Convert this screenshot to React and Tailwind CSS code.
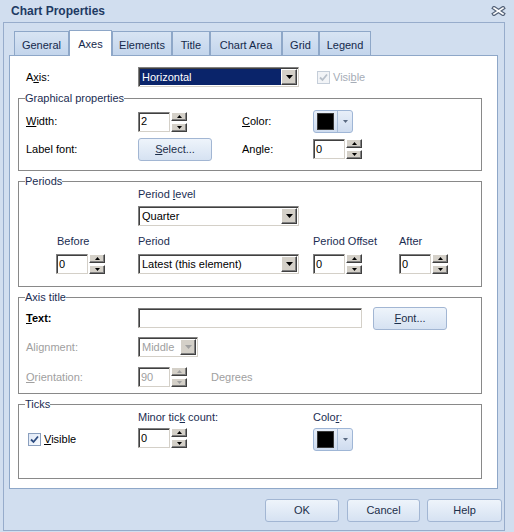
import React from "react";

const raised =
  "bg-[#d4d0c8] border border-t-white border-l-white border-r-[#404040] border-b-[#404040] shadow-[inset_-1px_-1px_0_#808080]";
const sunken =
  "border border-t-[#808080] border-l-[#808080] border-r-[#d4d0c8] border-b-[#d4d0c8] shadow-[inset_1px_1px_0_#404040]";
const navy = "text-[#1b2d52]";

function Tri({ up, w = 7, h = 4, color = "#000" }) {
  const d = up ? `M0 ${h}h${w}L${w / 2} 0z` : `M0 0h${w}L${w / 2} ${h}z`;
  return (
    <svg width={w} height={h} viewBox={`0 0 ${w} ${h}`}>
      <path d={d} fill={color} />
    </svg>
  );
}

function SpinBtn({ up, disabled }) {
  return (
    <div className={`w-[16px] h-[9px] flex items-center justify-center ${raised}`}>
      <Tri up={up} w={5} h={3} color={disabled ? "#a0a0a0" : "#000"} />
    </div>
  );
}

function Spin({ value, disabled }) {
  return (
    <div className="flex items-center">
      <div
        className={`w-[32px] h-[20px] bg-white pl-[2px] flex items-center ${sunken} ${
          disabled ? "text-[#a0a0a0]" : ""
        }`}
      >
        {value}
      </div>
      <div className="ml-[1px] flex flex-col gap-[2px]">
        <SpinBtn up disabled={disabled} />
        <SpinBtn disabled={disabled} />
      </div>
    </div>
  );
}

function Combo({ value, width, selected, disabled }) {
  return (
    <div className={`${width} h-[20px] bg-white flex items-center ${sunken}`}>
      <div
        className={`flex-1 self-stretch my-[1px] ml-[1px] flex items-center pl-[2px] ${
          selected ? "bg-[#0a246a] text-white" : ""
        } ${disabled ? "text-[#a0a0a0]" : ""}`}
      >
        {value}
      </div>
      <div className={`w-[16px] h-[16px] mr-[1px] flex items-center justify-center ${raised}`}>
        <Tri color={disabled ? "#a0a0a0" : "#000"} />
      </div>
    </div>
  );
}

function ColorPick() {
  return (
    <div className="w-[40px] h-[23px] rounded-[3px] border border-[#9fb6d6] bg-gradient-to-b from-[#e8eff9] to-[#cfdcef] flex items-center">
      <div className="ml-[3px] w-[17px] h-[17px] bg-black border border-[#3a3a3a]" />
      <div className="ml-[3px] w-px h-[21px] bg-[#a9bdd8]" />
      <div className="flex-1 flex justify-center">
        <Tri w={5} h={3} color="#5a6a82" />
      </div>
    </div>
  );
}

function Btn({ children, width, className = "" }) {
  return (
    <div
      className={`${width} shrink-0 h-[23px] rounded-[3px] border border-[#a2b6d3] bg-gradient-to-b from-[#eef4fb] to-[#d6e2f2] flex items-center justify-center text-[#1c2e4a] ${className}`}
    >
      {children}
    </div>
  );
}

function Check({ disabled }) {
  return (
    <div
      className={`w-[13px] h-[13px] border flex items-center justify-center ${
        disabled
          ? "border-[#c5ced9] bg-[#f2f4f7]"
          : "border-[#8a9fbe] bg-gradient-to-br from-[#dfe8f5] to-[#f8fbff]"
      }`}
    >
      <svg width="11" height="11" viewBox="0 0 11 11">
        <path
          d="M2 5.5l2.5 2.5L9 2.5"
          fill="none"
          stroke={disabled ? "#b8c0ca" : "#2d4c80"}
          strokeWidth="1.8"
        />
      </svg>
    </div>
  );
}

function Group({ title, className = "", children }) {
  return (
    <fieldset className={`w-[464px] border border-[#898989] ${className}`}>
      <legend className={`ml-[6px] leading-[13px] ${navy}`}>{title}</legend>
      {children}
    </fieldset>
  );
}

const tabs = [
  ["General", "w-[55px]"],
  ["Axes", "w-[43px]"],
  ["Elements", "w-[60px]"],
  ["Title", "w-[38px]"],
  ["Chart Area", "w-[72px]"],
  ["Grid", "w-[37px]"],
  ["Legend", "w-[52px]"],
];

export default function App() {
  return (
    <div className="w-[514px] h-[532px] bg-[#d1deef] font-['Liberation_Sans',Arial,sans-serif] text-[11px] leading-[13px] text-black select-none">
      {/* title bar */}
      <div className="h-[22px] flex items-center justify-between pl-[11px] pr-[8px]">
        <span className="font-bold text-[12px] text-[#1e3a63]">Chart Properties</span>
        <svg width="15" height="10" viewBox="0 0 15 10">
          <path d="M3 2l9 6M12 2l-9 6" stroke="#56647a" strokeWidth="4" strokeLinecap="square" />
          <path d="M3 2l9 6M12 2l-9 6" stroke="#fff" strokeWidth="1.6" strokeLinecap="square" />
        </svg>
      </div>

      <div className="ml-[3px] w-[502px] h-[509px] border border-[#97accb] px-[5px] pt-[7px]">
        {/* tab strip */}
        <div className="ml-[5px] h-[25px] flex items-end">
          {tabs.map(([name, w]) =>
            name === "Axes" ? (
              <div
                key={name}
                className={`${w} h-[26px] -mb-px relative z-10 bg-white border border-b-0 border-[#8ea7c8] flex items-center justify-center pt-[2px] text-[#15294b]`}
              >
                {name}
              </div>
            ) : (
              <div
                key={name}
                className={`${w} h-[24px] bg-gradient-to-b from-[#d8e4f3] to-[#c3d5ec] border border-b-0 border-[#8ea7c8] flex items-center justify-center pt-[4px] text-[#15294b]`}
              >
                {name}
              </div>
            )
          )}
        </div>

        {/* panel */}
        <div className="w-[489px] h-[434px] bg-white border border-[#8ea7c8] pt-[11px] pl-[8px]">
          <div className="h-[20px] flex items-center">
            <div className="w-[120px] pl-[8px]">
              A<span className="underline">x</span>is:
            </div>
            <Combo value="Horizontal" width="w-[161px]" selected />
            <div className="ml-[18px] flex items-center">
              <Check disabled />
              <span className="ml-[3px] text-[#a6adb7]">
                Visi<span className="underline">b</span>le
              </span>
            </div>
          </div>

          <Group title="Graphical properties" className="mt-[5px] pb-[10px]">
            <div className="mt-[5px] h-[23px] flex items-center pl-[7px]">
              <div className="w-[112px]">
                <span className="underline">W</span>idth:
              </div>
              <div className="w-[104px]">
                <Spin value="2" />
              </div>
              <div className="w-[71px]">
                <span className="underline">C</span>olor:
              </div>
              <ColorPick />
            </div>
            <div className="mt-[5px] h-[22px] flex items-center pl-[7px]">
              <div className="w-[112px]">Label font:</div>
              <div className="w-[104px]">
                <Btn width="w-[74px]">
                  <span>
                    <span className="underline">S</span>elect...
                  </span>
                </Btn>
              </div>
              <div className="w-[71px]">Angle:</div>
              <Spin value="0" />
            </div>
          </Group>

          <Group title="Periods" className="mt-[4px] pb-[12px]">
            <div className={`pl-[119px] ${navy}`}>
              Period <span className="underline">l</span>evel
            </div>
            <div className="mt-[5px] pl-[119px]">
              <Combo value="Quarter" width="w-[161px]" />
            </div>
            <div className={`mt-[9px] flex pl-[38px] ${navy}`}>
              <div className="w-[81px]">Before</div>
              <div className="w-[175px]">Period</div>
              <div className="w-[86px]">Period Offset</div>
              <div>After</div>
            </div>
            <div className="mt-[6px] h-[20px] flex items-center pl-[37px]">
              <div className="w-[82px]">
                <Spin value="0" />
              </div>
              <div className="w-[175px]">
                <Combo value="Latest (this element)" width="w-[161px]" />
              </div>
              <div className="w-[86px]">
                <Spin value="0" />
              </div>
              <Spin value="0" />
            </div>
          </Group>

          <Group title="Axis title" className="mt-[4px] pb-[6px]">
            <div className="mt-[3px] h-[22px] flex items-center pl-[7px]">
              <div className="w-[112px] font-bold">
                <span className="underline">T</span>ext:
              </div>
              <div className={`w-[224px] h-[20px] bg-white ${sunken}`} />
              <Btn width="w-[74px]" className="ml-[11px]">
                <span>
                  <span className="underline">F</span>ont...
                </span>
              </Btn>
            </div>
            <div className="mt-[8px] h-[20px] flex items-center pl-[7px]">
              <div className="w-[112px] text-[#a0a0a0]">Alignment:</div>
              <Combo value="Middle" width="w-[60px]" disabled />
            </div>
            <div className="mt-[10px] h-[20px] flex items-center pl-[7px]">
              <div className="w-[112px] text-[#a0a0a0]">
                <span className="underline">O</span>rientation:
              </div>
              <Spin value="90" disabled />
              <span className="ml-[24px] text-[#a0a0a0]">Degrees</span>
            </div>
          </Group>

          <Group title="Ticks" className="mt-[4px] pb-[27px]">
            <div className={`flex pl-[119px] ${navy}`}>
              <div className="w-[175px]">
                Minor tic<span className="underline">k</span> count:
              </div>
              <div>
                Colo<span className="underline">r</span>:
              </div>
            </div>
            <div className="mt-[4px] h-[23px] flex items-center pl-[9px]">
              <div className="w-[110px] flex items-center">
                <Check />
                <span className="ml-[3px]">
                  <span className="underline">V</span>isible
                </span>
              </div>
              <div className="w-[175px] self-start">
                <Spin value="0" />
              </div>
              <ColorPick />
            </div>
          </Group>
        </div>

        {/* dialog buttons */}
        <div className="mt-[10px] ml-[256px] flex">
          <Btn width="w-[74px]">OK</Btn>
          <Btn width="w-[73px]" className="ml-[8px]">
            Cancel
          </Btn>
          <Btn width="w-[75px]" className="ml-[7px]">
            Help
          </Btn>
        </div>
      </div>
    </div>
  );
}
